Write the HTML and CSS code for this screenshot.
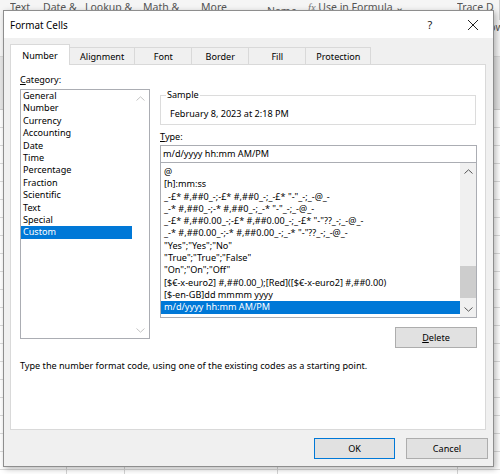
FILE: index.html
```html
<!DOCTYPE html>
<html lang="en">
<head>
<meta charset="utf-8">
<title>Format Cells</title>
<link rel="stylesheet" href="styles.css">
</head>
<body>
<div class="screen">
  <!-- workbook behind the dialog -->
  <div class="sheet">
    <div class="ribbon">
      <span class="rb">Text</span>
      <span class="rb">Date &amp;</span>
      <span class="rb">Lookup &amp;</span>
      <span class="rb">Math &amp;</span>
      <span class="rb">More</span>
      <span class="rb rb-low">Name</span>
      <span class="rb"><i class="fx">fx</i> Use in Formula &#x2304;</span>
      <span class="rb">Trace D</span>
    </div>
    <div class="ribbon-2"><span class="rb">Show</span></div>
    <div class="headers"></div>
    <div class="grid"></div>
  </div>

  <div class="dialog">
    <div class="titlebar">
      <span class="title">Format Cells</span>
      <span class="help">?</span>
      <span class="close">
        <svg width="12" height="12" viewBox="0 0 12 12"><path d="M1 1 L11 11 M11 1 L1 11" stroke="#222" stroke-width="1" fill="none"/></svg>
      </span>
    </div>

    <div class="body">
      <div class="tabs">
        <span class="tab active">Number</span>
        <span class="tab">Alignment</span>
        <span class="tab">Font</span>
        <span class="tab">Border</span>
        <span class="tab">Fill</span>
        <span class="tab">Protection</span>
      </div>

      <div class="panel">
        <div class="cols">
          <div class="left">
            <div class="label"><u>C</u>ategory:</div>
            <div class="listbox cat-list">
              <ul class="items">
                <li>General</li>
                <li>Number</li>
                <li>Currency</li>
                <li>Accounting</li>
                <li>Date</li>
                <li>Time</li>
                <li>Percentage</li>
                <li>Fraction</li>
                <li>Scientific</li>
                <li>Text</li>
                <li>Special</li>
                <li class="sel">Custom</li>
              </ul>
              <div class="vscroll off">
                <span class="arrow"><svg width="9" height="5" viewBox="0 0 9 5"><path d="M0.5 4.5 L4.5 0.8 L8.5 4.5" stroke="#c4c4c4" fill="none"/></svg></span>
                <span class="track"></span>
                <span class="arrow"><svg width="9" height="5" viewBox="0 0 9 5"><path d="M0.5 0.5 L4.5 4.2 L8.5 0.5" stroke="#c4c4c4" fill="none"/></svg></span>
              </div>
            </div>
          </div>

          <div class="right">
            <fieldset class="sample">
              <legend>Sample</legend>
              <div class="sample-val">February 8, 2023 at 2:18 PM</div>
            </fieldset>
            <div class="label type-label"><u>T</u>ype:</div>
            <div class="type-input">m/d/yyyy hh:mm AM/PM</div>
            <div class="listbox type-list">
              <ul class="items">
                <li>@</li>
                <li>[h]:mm:ss</li>
                <li>_-£* #,##0_-;-£* #,##0_-;_-£* "-"_-;_-@_-</li>
                <li>_-* #,##0_-;-* #,##0_-;_-* "-"_-;_-@_-</li>
                <li>_-£* #,##0.00_-;-£* #,##0.00_-;_-£* "-"??_-;_-@_-</li>
                <li>_-* #,##0.00_-;-* #,##0.00_-;_-* "-"??_-;_-@_-</li>
                <li>"Yes";"Yes";"No"</li>
                <li>"True";"True";"False"</li>
                <li>"On";"On";"Off"</li>
                <li>[$€-x-euro2] #,##0.00_);[Red]([$€-x-euro2] #,##0.00)</li>
                <li>[$-en-GB]dd mmmm yyyy</li>
                <li class="sel">m/d/yyyy hh:mm AM/PM</li>
              </ul>
              <div class="vscroll">
                <span class="arrow"><svg width="9" height="5" viewBox="0 0 9 5"><path d="M0.5 4.5 L4.5 0.8 L8.5 4.5" stroke="#555" fill="none"/></svg></span>
                <span class="track"><span class="thumb"></span></span>
                <span class="arrow"><svg width="9" height="5" viewBox="0 0 9 5"><path d="M0.5 0.5 L4.5 4.2 L8.5 0.5" stroke="#555" fill="none"/></svg></span>
              </div>
            </div>
            <div class="delete-row">
              <button class="btn"><u>D</u>elete</button>
            </div>
          </div>
        </div>
        <p class="hint">Type the number format code, using one of the existing codes as a starting point.</p>
      </div>

      <div class="buttons">
        <button class="btn default">OK</button>
        <button class="btn">Cancel</button>
      </div>
    </div>
  </div>
</div>
</body>
</html>
```

FILE: styles.css
```css
* {
  box-sizing: border-box;
}

body {
  margin: 0;
  width: 500px;
  height: 474px;
  overflow: hidden;
  font-family: "Noto Sans", "Segoe UI", sans-serif;
  font-size: 9.1px;
  color: #000;
}

.screen {
  position: relative;
  width: 500px;
  height: 474px;
}

/* ---------- workbook in the background ---------- */
.sheet {
  display: flex;
  flex-direction: column;
  height: 100%;
  background: #fff;
}

.ribbon {
  height: 20px;
  background: #f5f5f5;
  display: grid;
  grid-template-columns: 33px 42px 58px 58px 66px 41px 149px auto;
  padding-left: 10px;
  color: #555;
  font-size: 10.5px;
  line-height: 14px;
  border-right: 1px solid #d0d0d0;
}

.rb {
  white-space: nowrap;
  overflow: hidden;
}

.rb-low {
  padding-top: 4px;
}

.fx {
  font-family: "Liberation Serif", serif;
  color: #777;
}

.ribbon-2 {
  height: 37px;
  background: #f5f5f5;
  padding: 0 0 0 477px;
  color: #555;
  font-size: 10.5px;
  line-height: 14px;
  border-bottom: 1px solid #d8d8d8;
}

.headers {
  height: 53px;
  background: #e6e6e6;
  border-bottom: 1px solid #cfcfcf;
}

.grid {
  flex: 1;
  background-color: #fff;
  background-image:
    linear-gradient(#d4d4d4, #d4d4d4),
    linear-gradient(#d4d4d4, #d4d4d4),
    linear-gradient(#d4d4d4, #d4d4d4),
    linear-gradient(#d4d4d4, #d4d4d4),
    repeating-linear-gradient(to bottom, transparent 0, transparent 17px, #dadada 17px, #dadada 18px);
  background-size: 1px 100%, 1px 100%, 1px 100%, 1px 100%, 100% 100%;
  background-position: 66px 0, 124px 0, 277px 0, 457px 0, 0 0;
  background-repeat: no-repeat;
}

/* ---------- dialog window ---------- */
.dialog {
  position: absolute;
  left: 3px;
  top: 10px;
  width: 491px;
  height: 457px;
  border: 1px solid #8e8e8e;
  background: #f0f0f0;
  box-shadow: 2px 2px 6px rgba(0, 0, 0, 0.28);
  display: flex;
  flex-direction: column;
}

.titlebar {
  height: 27px;
  background: #fff;
  display: flex;
  align-items: center;
  padding-left: 6px;
}

.title {
  flex: 1;
  font-size: 9.9px;
}

.help {
  width: 46px;
  text-align: center;
  font-size: 11px;
  color: #222;
}

.close {
  width: 40px;
  display: flex;
  justify-content: center;
  align-items: center;
}

.body {
  flex: 1;
  display: flex;
  flex-direction: column;
  padding: 6px 7px 0 6px;
}

/* ---------- tabs ---------- */
.tabs {
  height: 21px;
  margin-bottom: -1px;
  display: flex;
  align-items: flex-end;
}

.tab {
  height: 18px;
  min-width: 58px;
  padding: 0 10px;
  text-align: center;
  line-height: 17px;
  border: 1px solid #d9d9d9;
  border-bottom: none;
  margin-left: -1px;
  background: #f0f0f0;
}

.tab.active {
  position: relative;
  z-index: 1;
  height: 21px;
  margin-left: 0;
  min-width: 60px;
  background: #fff;
  line-height: 22px;
}

/* ---------- page panel ---------- */
.panel {
  height: 366px;
  border: 1px solid #d9d9d9;
  background: #fff;
  padding: 8px 7px 0 9px;
}

.cols {
  display: flex;
  gap: 10px;
}

.left {
  width: 130px;
}

.right {
  width: 317px;
}

.label {
  line-height: 14px;
  height: 14px;
}

.listbox {
  display: flex;
  border: 1px solid #abadb3;
  background: #fff;
}

.cat-list {
  margin-top: 2px;
  height: 250px;
}

.items {
  list-style: none;
  margin: 0;
  flex: 1;
  white-space: nowrap;
  overflow: hidden;
}

.items li {
  height: 12.4px;
  line-height: 12.4px;
}

.cat-list .items {
  padding: 0;
}

.cat-list .items li {
  padding-left: 2px;
}

.items li.sel {
  background: #0078d7;
  color: #fff;
}

.vscroll {
  width: 16px;
  display: flex;
  flex-direction: column;
  background: #f0f0f0;
}

.vscroll.off {
  width: 17px;
  background: #fff;
}

.arrow {
  height: 16px;
  display: flex;
  align-items: center;
  justify-content: center;
}

.track {
  flex: 1;
  display: flex;
  flex-direction: column;
  justify-content: flex-end;
  padding-bottom: 3px;
}

.thumb {
  height: 32px;
  background: #cdcdcd;
}

/* sample group */
.sample {
  margin: 15px 1px 0 0;
  padding: 0 0 3px 9px;
  border: 1px solid #dcdcdc;
}

.sample legend {
  padding: 0 1px;
  margin-left: -4px;
  line-height: 14px;
}

.sample-val {
  margin-top: 5px;
  line-height: 14px;
}

.type-label {
  margin-top: 5px;
}

.type-input {
  margin-top: 1px;
  height: 18px;
  border: 1px solid #abadb3;
  padding-left: 2px;
  line-height: 16px;
}

.type-list {
  margin-top: -1px;
  height: 156px;
}

.type-list .items {
  padding: 3px 0 0 0;
}

.type-list .items li {
  height: 12.3px;
  line-height: 12.3px;
  padding-left: 3px;
}

.delete-row {
  display: flex;
  justify-content: flex-end;
  margin-top: 9px;
}

.btn {
  font-family: inherit;
  font-size: 9.1px;
  color: #000;
  height: 21px;
  width: 82px;
  padding: 0;
  border: 1px solid #adadad;
  background: #e1e1e1;
}

.btn.default {
  width: 81px;
  border-color: #0078d7;
}

.hint {
  margin: 11px 0 0;
  line-height: 14px;
}

/* ---------- OK / Cancel ---------- */
.buttons {
  display: flex;
  justify-content: flex-end;
  gap: 11px;
  margin: 8px -2px 0 0;
}
```
